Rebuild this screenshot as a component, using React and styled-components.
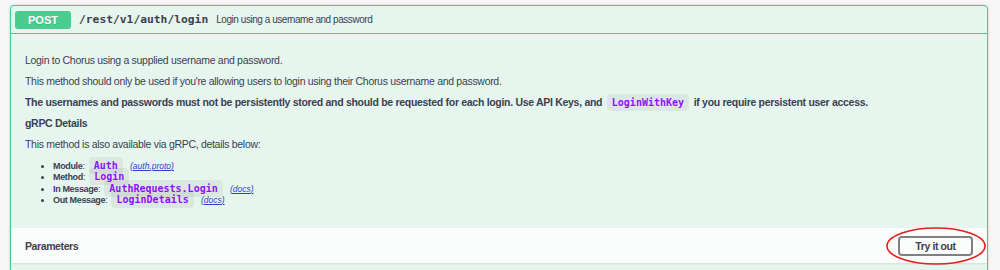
import React from 'react';
import styled, { createGlobalStyle } from 'styled-components';

const GlobalStyle = createGlobalStyle`
  body {
    margin: 0;
    background: #f7f7f7;
    font-family: "Liberation Sans", Arial, sans-serif;
    color: #3b4151;
  }
`;

const Page = styled.div`
  padding: 5px 12px 0 10px;
  height: 265px;
  overflow: hidden;
`;

const OpBlock = styled.div`
  border: 1px solid #49cc90;
  border-radius: 4px;
  background: #e7f5ef;
  box-shadow: 0 0 3px rgba(0, 0, 0, 0.19);
  min-height: 280px;
`;

const Summary = styled.div`
  display: flex;
  align-items: center;
  height: 27px;
  padding: 0 4px;
  border-bottom: 1px solid #49cc90;
`;

const MethodBadge = styled.span`
  display: flex;
  align-items: center;
  justify-content: center;
  width: 56px;
  height: 18px;
  border-radius: 3px;
  background: #49cc90;
  color: #fff;
  font-weight: 700;
  font-size: 11px;
  text-shadow: 0 1px 0 rgba(0, 0, 0, 0.1);
`;

const Path = styled.span`
  padding: 0 8px;
  font-family: "DejaVu Sans Mono", monospace;
  font-weight: 700;
  font-size: 11.3px;
  color: #3b4151;
`;

const SummaryDesc = styled.span`
  font-size: 10px;
  letter-spacing: -0.45px;
  color: #3b4151;
`;

const Body = styled.div`
  padding: 16px 14px 22px;
  font-size: 10.5px;
  letter-spacing: -0.3px;
`;

const Para = styled.p`
  margin: 0;
  line-height: 21px;
  font-weight: ${(p) => (p.$bold ? 700 : 400)};
`;

const Code = styled.code`
  font-family: "DejaVu Sans Mono", monospace;
  font-weight: 700;
  font-size: 10px;
  line-height: 10px;
  letter-spacing: 0;
  color: #9012fe;
  background: rgba(0, 0, 0, 0.05);
  border-radius: 4px;
  padding: 3px 5px;
  margin: 0 2px;
`;

const DetailList = styled.ul`
  margin: 6px 0 0;
  padding-left: 28px;
  list-style: disc;
`;

const DetailItem = styled.li`
  font-size: 9px;
  line-height: 11.3px;
  letter-spacing: -0.35px;
`;

const Label = styled.b`
  font-weight: 700;
`;

const DocLink = styled.a`
  font-style: italic;
  color: #2f3fd0;
  font-size: 8.5px;
  letter-spacing: 0;
  margin-left: 3px;
`;

const ParamsBar = styled.div`
  display: flex;
  align-items: center;
  justify-content: space-between;
  height: 35px;
  padding: 0 14px;
  background: rgba(255, 255, 255, 0.82);
  box-shadow: 0 1px 2px rgba(0, 0, 0, 0.1);
`;

const ParamsTitle = styled.h4`
  margin: 0;
  font-size: 10.5px;
  letter-spacing: -0.4px;
  font-weight: 700;
`;

const Annotated = styled.div`
  position: relative;
`;

const TryButton = styled.button`
  width: 75px;
  height: 20px;
  border: 2px solid #808080;
  border-radius: 4px;
  background: transparent;
  font-family: "Liberation Sans", Arial, sans-serif;
  font-weight: 700;
  font-size: 10.5px;
  letter-spacing: -0.4px;
  color: #3b4151;
  padding: 0;
`;

const Ellipse = styled.svg`
  position: absolute;
  left: -12px;
  top: -9px;
  width: 100px;
  height: 38px;
  overflow: visible;
  pointer-events: none;
`;

export default function App() {
  return (
    <>
      <GlobalStyle />
      <Page>
        <OpBlock>
          <Summary>
            <MethodBadge>POST</MethodBadge>
            <Path>/rest/v1/auth/login</Path>
            <SummaryDesc>Login using a username and password</SummaryDesc>
          </Summary>
          <Body>
            <Para>Login to Chorus using a supplied username and password.</Para>
            <Para>This method should only be used if you're allowing users to login using their Chorus username and password.</Para>
            <Para $bold>
              The usernames and passwords must not be persistently stored and should be requested for each login. Use API Keys, and{' '}
              <Code>LoginWithKey</Code> if you require persistent user access.
            </Para>
            <Para $bold>gRPC Details</Para>
            <Para>This method is also available via gRPC, details below:</Para>
            <DetailList>
              <DetailItem>
                <Label>Module</Label>: <Code>Auth</Code> <DocLink href="#">(<u>auth.proto</u>)</DocLink>
              </DetailItem>
              <DetailItem>
                <Label>Method</Label>: <Code>Login</Code>
              </DetailItem>
              <DetailItem>
                <Label>In Message</Label>: <Code>AuthRequests.Login</Code> <DocLink href="#">(<u>docs</u>)</DocLink>
              </DetailItem>
              <DetailItem>
                <Label>Out Message</Label>: <Code>LoginDetails</Code> <DocLink href="#">(<u>docs</u>)</DocLink>
              </DetailItem>
            </DetailList>
          </Body>
          <ParamsBar>
            <ParamsTitle>Parameters</ParamsTitle>
            <Annotated>
              <TryButton>Try it out</TryButton>
              <Ellipse viewBox="0 0 100 38">
                <ellipse cx="50" cy="19" rx="49" ry="18" fill="none" stroke="#e3201b" strokeWidth="1.6" />
              </Ellipse>
            </Annotated>
          </ParamsBar>
        </OpBlock>
      </Page>
    </>
  );
}
